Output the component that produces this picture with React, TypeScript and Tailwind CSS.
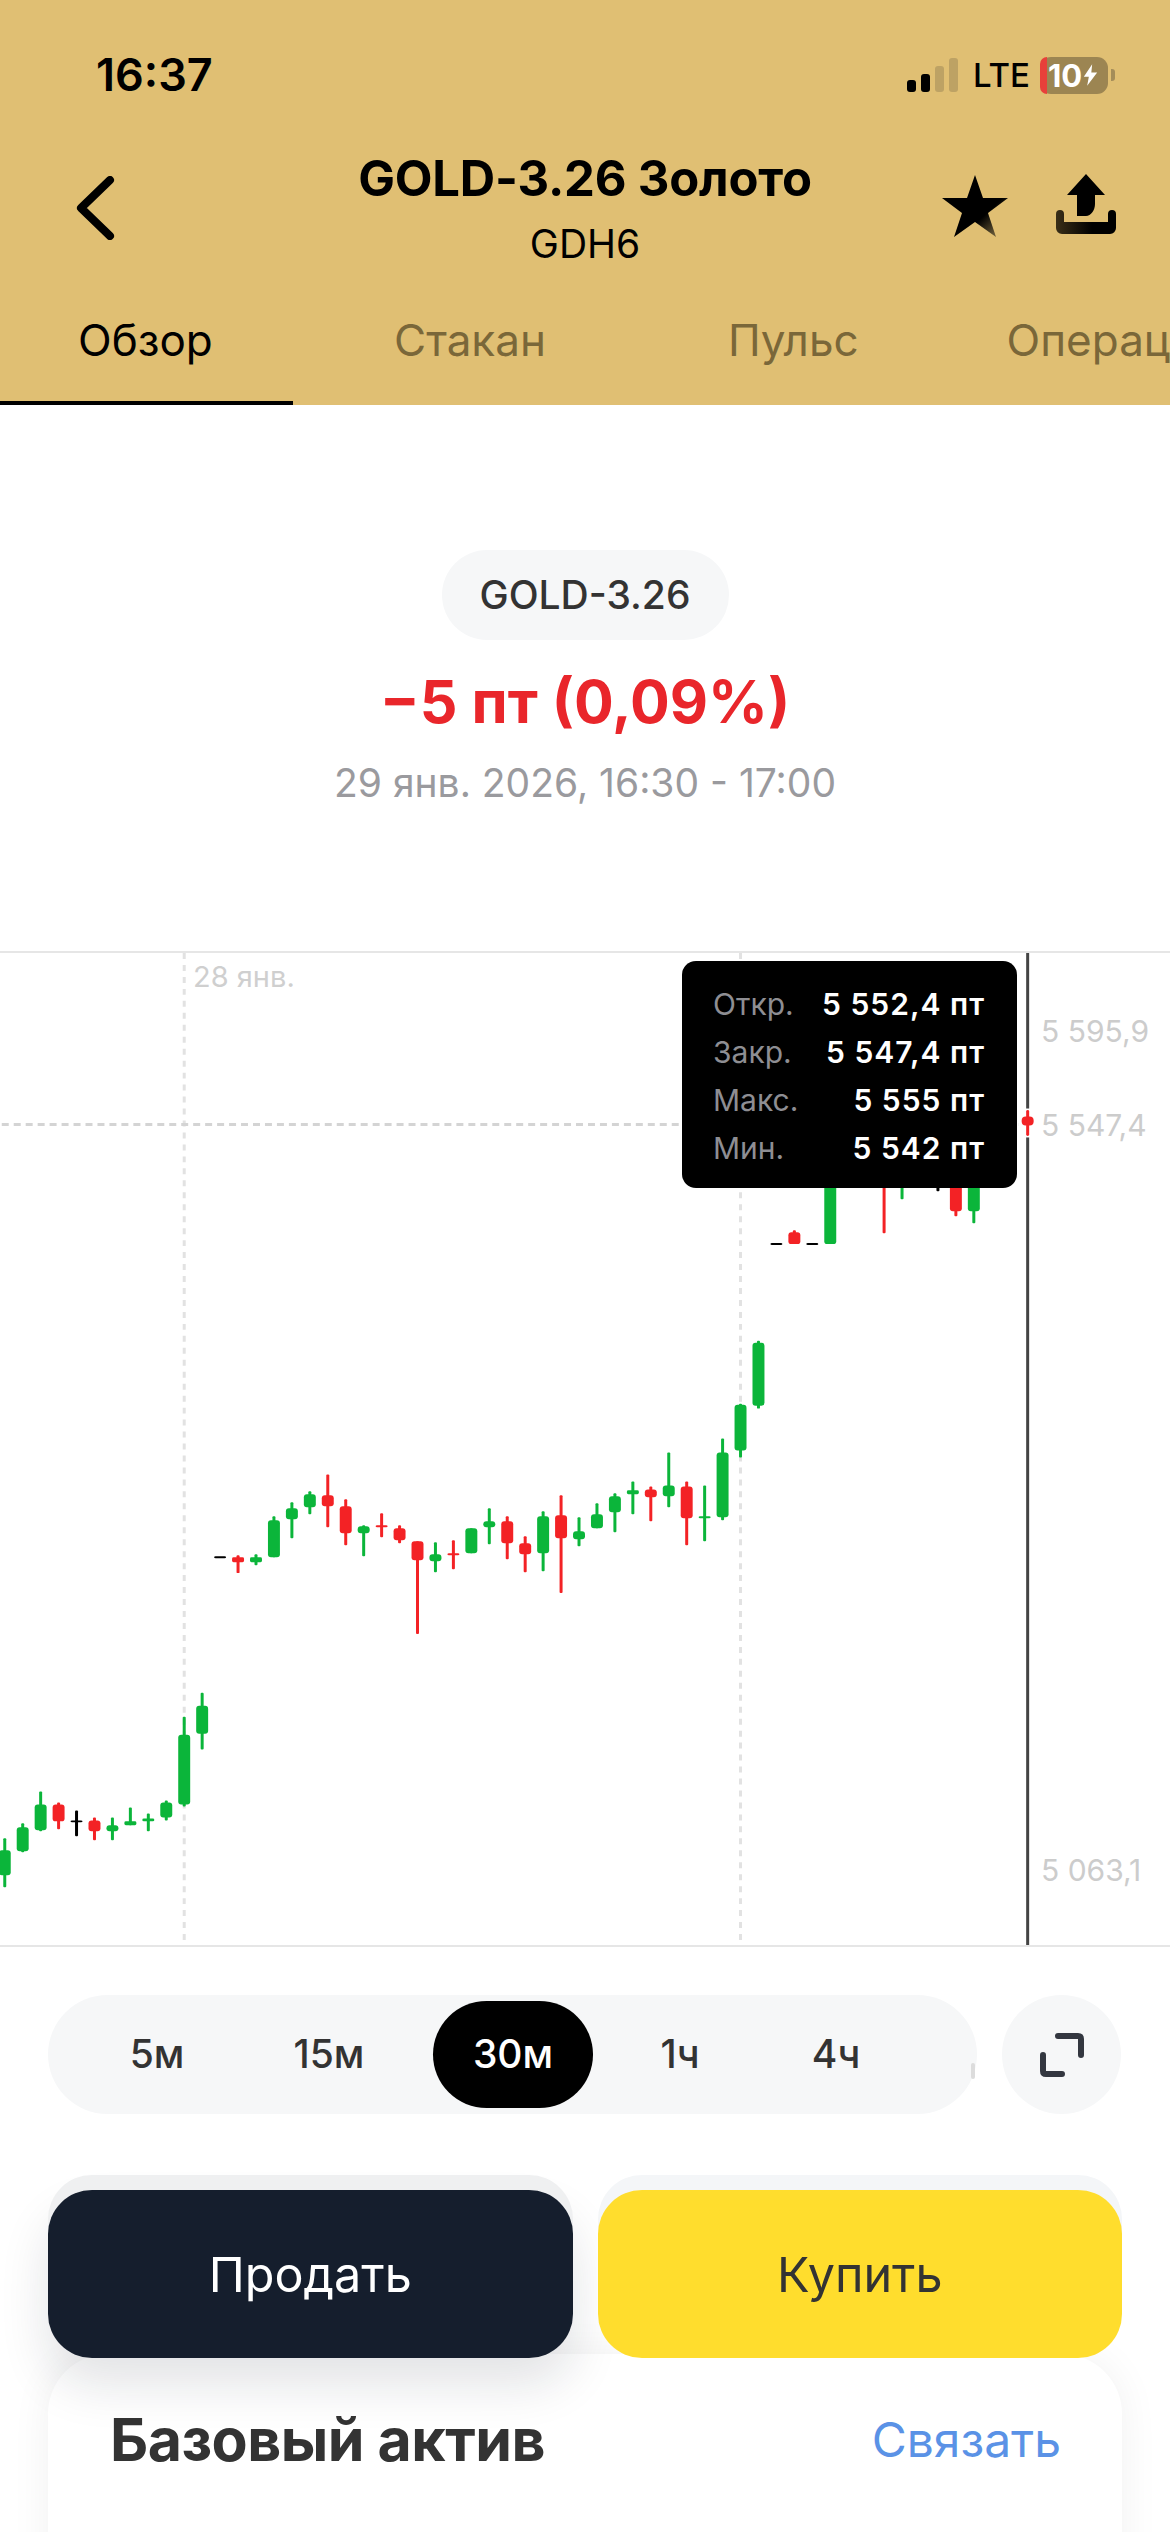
const FONT = 'font-["Inter","Liberation_Sans",sans-serif]'

const GREEN = '#0bb53a'
const RED = '#f32225'
const BLACK = '#000000'

// x, wick top, wick bottom, body top, body bottom, colour (page coordinates)
const candles: [number, number, number, number, number, string][] = [
  [3, 1839, 1888, 1851, 1876, GREEN],
  [21, 1824, 1853, 1828, 1852, GREEN],
  [39, 1792, 1832, 1805, 1831, GREEN],
  [57, 1803, 1830, 1805, 1822, RED],
  [75, 1811, 1837, 1821, 1823, BLACK],
  [93, 1818, 1841, 1821, 1832, RED],
  [111, 1818, 1841, 1826, 1832, GREEN],
  [129, 1808, 1826, 1822, 1826, GREEN],
  [147, 1814, 1832, 1819, 1822, GREEN],
  [165, 1801, 1821, 1803, 1818, GREEN],
  [183, 1717, 1807, 1735, 1805, GREEN],
  [201, 1693, 1750, 1706, 1734, GREEN],
  [219, 1557, 1557, 1556, 1558, BLACK],
  [237, 1555, 1573, 1557, 1562, RED],
  [255, 1554, 1565, 1557, 1562, GREEN],
  [273, 1516, 1557, 1520, 1557, GREEN],
  [291, 1502, 1538, 1508, 1519, GREEN],
  [309, 1491, 1514, 1494, 1507, GREEN],
  [327, 1474, 1527, 1495, 1506, RED],
  [345, 1499, 1545, 1506, 1533, RED],
  [363, 1525, 1556, 1526, 1533, GREEN],
  [381, 1513, 1537, 1525, 1527, RED],
  [399, 1525, 1543, 1528, 1540, RED],
  [417, 1541, 1634, 1541, 1560, RED],
  [435, 1542, 1572, 1554, 1561, GREEN],
  [453, 1540, 1569, 1553, 1555, RED],
  [471, 1528, 1553, 1528, 1553, GREEN],
  [489, 1508, 1544, 1521, 1527, GREEN],
  [507, 1516, 1559, 1521, 1543, RED],
  [525, 1536, 1572, 1543, 1554, RED],
  [543, 1511, 1571, 1516, 1553, GREEN],
  [561, 1495, 1593, 1515, 1538, RED],
  [579, 1517, 1546, 1531, 1539, GREEN],
  [597, 1503, 1528, 1514, 1528, GREEN],
  [615, 1493, 1532, 1496, 1512, GREEN],
  [633, 1481, 1514, 1490, 1494, GREEN],
  [651, 1486, 1521, 1489, 1497, RED],
  [669, 1452, 1507, 1485, 1496, GREEN],
  [687, 1481, 1545, 1486, 1518, RED],
  [705, 1485, 1541, 1516, 1518, GREEN],
  [723, 1438, 1520, 1452, 1517, GREEN],
  [741, 1403, 1457, 1404, 1450, GREEN],
  [759, 1340, 1408, 1342, 1405, GREEN],
  [777, 1243, 1243, 1242, 1244, BLACK],
  [795, 1229, 1243, 1231, 1243, RED],
  [813, 1243, 1243, 1242, 1244, BLACK],
  [831, 1150, 1243, 1160, 1243, GREEN],
  [885, 1150, 1232, 1160, 1180, RED],
  [903, 1150, 1198, 1160, 1180, GREEN],
  [939, 1150, 1190, 1160, 1170, BLACK],
  [957, 1150, 1215, 1160, 1210, RED],
  [975, 1150, 1222, 1160, 1210, GREEN],
]

const CHART_TOP = 951

const tooltipRows = [
  ['Откр.', '5 552,4 пт'],
  ['Закр.', '5 547,4 пт'],
  ['Макс.', '5 555 пт'],
  ['Мин.', '5 542 пт'],
]

function StatusBar() {
  return (
    <div className="flex h-[150px] items-center justify-between pl-[96px] pr-[55px]">
      <span className="text-[45px] font-semibold text-black">16:37</span>
      <div className="flex items-center">
        <div className="flex h-[34px] items-end gap-[5px]">
          <span className="h-[12px] w-[9px] rounded-[3px] bg-black" />
          <span className="h-[18px] w-[9px] rounded-[3px] bg-black" />
          <span className="h-[26px] w-[9px] rounded-[3px] bg-[#bda264]" />
          <span className="h-[34px] w-[9px] rounded-[3px] bg-[#bda264]" />
        </div>
        <span className="ml-[15px] w-[52px] text-[33px] font-medium leading-none text-black">LTE</span>
        <div className="relative ml-[15px] flex h-[37px] w-[68px] items-center rounded-[11px] bg-[#9c8552] pl-[8px]">
          <span className="absolute bottom-0 left-0 top-0 w-[7px] rounded-l-[11px] bg-[#e8403a]" />
          <span className="relative text-[31px] font-bold leading-none text-white">10</span>
          <svg className="relative ml-[1px]" width="15" height="24" viewBox="0 0 18 26">
            <path d="M11 0 1 15h6l-2 11L17 10h-7z" fill="#fff" />
          </svg>
        </div>
        <span className="ml-[3px] h-[12px] w-[4px] rounded-r-[3px] bg-[#a48d59]" />
      </div>
    </div>
  )
}

function TitleBar() {
  return (
    <div className="relative flex h-[150px] flex-col items-center">
      <span className="mt-[5px] text-[49px] font-bold leading-[48px] tracking-[-0.2px] text-black">GOLD-3.26 Золото</span>
      <span className="mt-[19px] text-[39px] leading-[44px] text-black">GDH6</span>
      <svg className="absolute left-[76px] top-[26px]" width="40" height="64" viewBox="0 0 40 64" fill="none">
        <path d="M34 4 5 32l29 28" stroke="#000" strokeWidth="8" strokeLinecap="round" strokeLinejoin="round" />
      </svg>
      <svg className="absolute left-[942px] top-[25px]" width="66" height="62" viewBox="0 0 66 62">
        <defs>
          <linearGradient id="starFade" x1="0.45" y1="0.6" x2="0.85" y2="1">
            <stop offset="0.3" stopColor="#000" />
            <stop offset="1" stopColor="#7c6a41" />
          </linearGradient>
        </defs>
        <path d="M33 0 41 23 66 23 46 38 54 62 33 47 12 62 20 38 0 23 25 23Z" fill="url(#starFade)" />
      </svg>
      <svg className="absolute left-[1056px] top-[24px]" width="60" height="60" viewBox="0 0 60 60">
        <defs>
          <linearGradient id="trayFade" x1="0" y1="0" x2="1" y2="0">
            <stop offset="0" stopColor="#3a2f18" />
            <stop offset="0.6" stopColor="#000" />
          </linearGradient>
        </defs>
        <path d="M30 0 49 21H39V30C39 36 35 42 30 42H21V21H11Z" fill="#000" />
        <path d="M4 36a4 4 0 0 1 4 4V48H52V40a4 4 0 0 1 4-4h0a4 4 0 0 1 4 4V54a6 6 0 0 1-6 6H6a6 6 0 0 1-6-6V40a4 4 0 0 1 4-4Z" fill="url(#trayFade)" />
      </svg>
    </div>
  )
}

function Tabs() {
  return (
    <div className="flex h-[105px] overflow-hidden whitespace-nowrap text-[44px] leading-[80px] text-[#7a6739]">
      <span className="h-[105px] w-[293px] shrink-0 border-b-[4px] border-black pl-[78px] text-black">Обзор</span>
      <span className="ml-[101px] shrink-0">Стакан</span>
      <span className="ml-[182px] shrink-0">Пульс</span>
      <span className="ml-[148px] shrink-0">Операции</span>
    </div>
  )
}

function CandleChart() {
  return (
    <svg className="block h-full w-full" viewBox={`0 ${CHART_TOP} 1170 995`}>
      <line x1="183" y1={CHART_TOP} x2="183" y2="1946" stroke="#e2e2e2" strokeWidth="3" strokeDasharray="6 6" />
      <line x1="741" y1={CHART_TOP} x2="741" y2="1946" stroke="#e2e2e2" strokeWidth="3" strokeDasharray="6 6" />
      <line x1="0" y1="1123" x2="1028" y2="1123" stroke="#d4d4d4" strokeWidth="3" strokeDasharray="7 5" />
      <line x1="1029" y1={CHART_TOP} x2="1029" y2="1946" stroke="#444" strokeWidth="3" />
      <rect x="1020" y="1107" width="18" height="29" fill="#fff" />
      <line x1="1029" y1="1110" x2="1029" y2="1133" stroke={RED} strokeWidth="3" strokeLinecap="round" />
      <rect x="1023" y="1115" width="12" height="9" rx="4" fill={RED} />
      {candles.map(([x, wickTop, wickBottom, bodyTop, bodyBottom, color]) => (
        <g key={x} fill={color}>
          {wickBottom > wickTop && <rect x={x - 1.5} y={wickTop} width="3" height={wickBottom - wickTop} rx="1" />}
          <rect
            x={x - 6}
            y={bodyTop}
            width="12"
            height={bodyBottom - bodyTop}
            rx={bodyBottom - bodyTop < 6 ? 1.5 : 3}
          />
        </g>
      ))}
    </svg>
  )
}

function Chart() {
  return (
    <div className="relative mt-[143px] h-[996px] border-y-2 border-[#e6e6e6]">
      <CandleChart />
      <span className="absolute left-[193px] top-[8px] text-[29px] leading-[32px] text-[#cfcfcf]">28 янв.</span>
      <span className="absolute left-[1041px] top-[60px] text-[30px] leading-[36px] text-[#cccccc]">5 595,9</span>
      <span className="absolute left-[1041px] top-[154px] text-[30px] leading-[36px] text-[#cccccc]">5 547,4</span>
      <span className="absolute left-[1041px] top-[899px] text-[30px] leading-[36px] text-[#cccccc]">5 063,1</span>
      <div className="absolute left-[682px] top-[8px] w-[335px] rounded-[14px] bg-black pb-[16px] pl-[31px] pr-[32px] pt-[19px]">
        {tooltipRows.map(([label, value]) => (
          <div key={label} className="flex h-[48px] items-center justify-between text-[30px]">
            <span className="text-[#8e8e93]">{label}</span>
            <span className="font-semibold tracking-[1px] text-white">{value}</span>
          </div>
        ))}
      </div>
    </div>
  )
}

function RangeBar() {
  return (
    <div className="mx-[48px] mt-[48px] flex h-[119px] gap-[25px]">
      <div className="relative flex h-[119px] w-[929px] items-center rounded-full bg-[#f6f7f8] text-center text-[39px] font-medium text-[#333333]">
        <span className="ml-[49px] w-[120px]">5м</span>
        <span className="ml-[52px] w-[120px]">15м</span>
        <span className="ml-[44px] flex h-[107px] w-[160px] items-center justify-center rounded-full bg-black text-white">
          30м
        </span>
        <span className="ml-[27px] w-[120px]">1ч</span>
        <span className="ml-[36px] w-[120px]">4ч</span>
        <span className="absolute right-[2px] top-[68px] h-[16px] w-[4px] rounded-full bg-[#dcdcdc]" />
      </div>
      <div className="flex h-[119px] w-[119px] items-center justify-center rounded-full bg-[#f6f7f8]">
        <svg width="44" height="44" viewBox="0 0 44 44" fill="none">
          <path
            d="M18 3H38C40 3 41 4 41 6V22M3 22V38C3 40 4 41 6 41H22"
            stroke="#333740"
            strokeWidth="6"
            strokeLinecap="round"
          />
        </svg>
      </div>
    </div>
  )
}

function Actions() {
  return (
    <div className="relative z-10 mx-[48px] mt-[76px] flex h-[168px] gap-[25px] text-[48.5px]">
      <button className="flex-1 rounded-[44px] bg-[#151e2d] pt-[2px] text-white shadow-[0_-15px_0_0_#eff0f1,0_26px_50px_rgba(20,25,40,0.12)]">
        Продать
      </button>
      <button className="flex-1 rounded-[44px] bg-[#ffdd2d] pt-[2px] text-[#333333] shadow-[0_-15px_0_0_#f4f6f8]">
        Купить
      </button>
    </div>
  )
}

function AssetCard() {
  return (
    <div className="mx-[48px] -mt-[4px] flex h-[300px] items-start justify-between rounded-[60px] bg-white pl-[62px] pr-[61px] pt-[54px] shadow-[0_0_40px_rgba(0,0,0,0.06)]">
      <span className="text-[59px] font-bold leading-[64px] tracking-[-0.5px] text-[#333333]">Базовый актив</span>
      <span className="text-[48px] leading-[64px] text-[#5a92e6]">Связать</span>
    </div>
  )
}

export default function App() {
  return (
    <div className={`h-[2532px] w-[1170px] overflow-hidden bg-white ${FONT}`}>
      <header className="h-[405px] bg-[#e0bf73]">
        <StatusBar />
        <TitleBar />
        <Tabs />
      </header>

      <div className="flex flex-col items-center pt-[145px]">
        <span className="flex h-[90px] w-[287px] items-center justify-center rounded-full bg-[#f6f7f8] text-[39px] font-medium text-[#333333]">
          GOLD-3.26
        </span>
        <span className="mt-[26px] text-[59px] font-bold leading-[72px] text-[#e9262b]">−5 пт (0,09%)</span>
        <span className="mt-[20px] text-[39px] leading-[50px] text-[#9a9a9e]">29 янв. 2026, 16:30 - 17:00</span>
      </div>

      <Chart />
      <RangeBar />
      <Actions />
      <AssetCard />
    </div>
  )
}
